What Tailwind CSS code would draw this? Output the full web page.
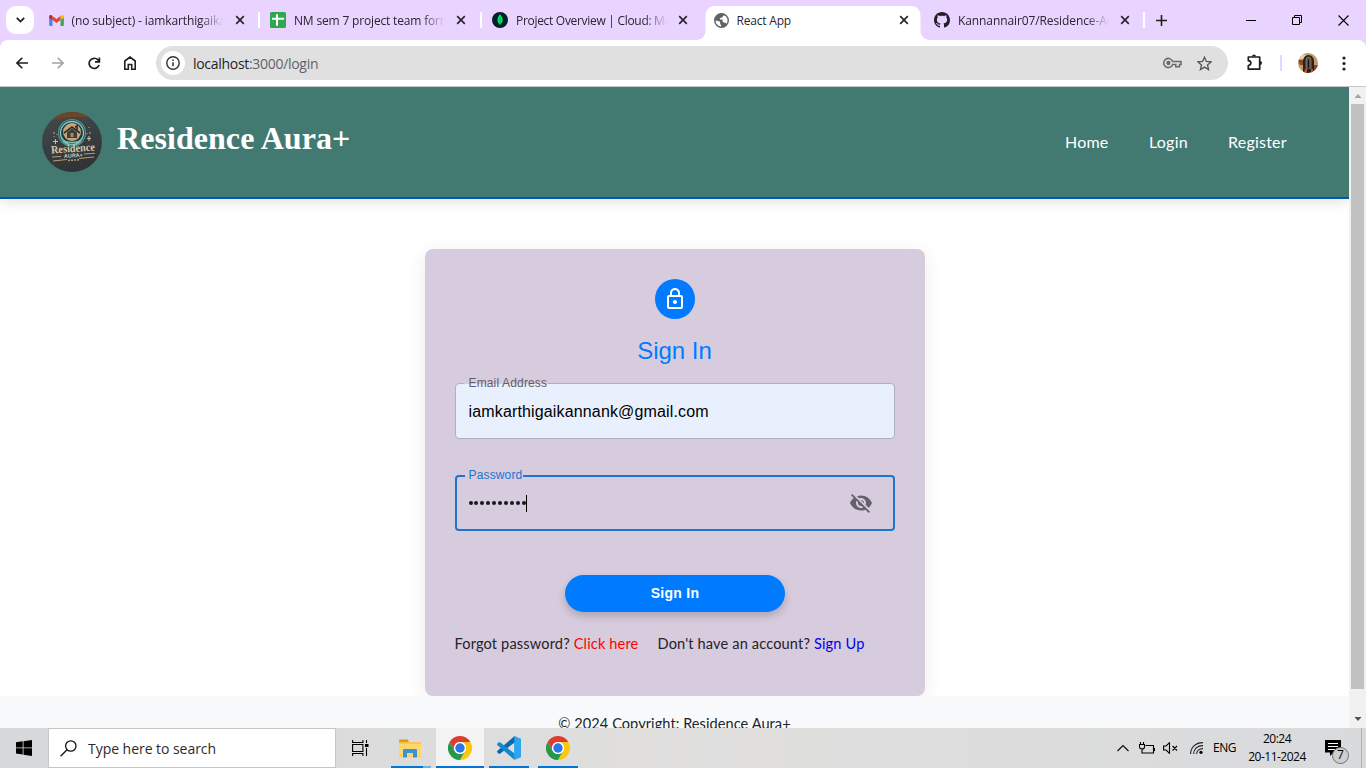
<!DOCTYPE html>
<html lang="en">
<head>
<meta charset="utf-8">
<title>React App</title>
<script src="https://cdn.jsdelivr.net/npm/@tailwindcss/browser@4"></script>
</head>
<body class="w-[1366px] h-[768px] overflow-hidden bg-white flex flex-col font-['Open_Sans',sans-serif]">

<svg class="hidden">
  <defs>
    <symbol id="close" viewBox="0 0 10 10"><path d="M1.2 1.2 8.8 8.8M8.8 1.2 1.2 8.8" stroke="#2a2530" stroke-width="1.7" fill="none"/></symbol>
    <symbol id="chrome" viewBox="0 0 48 48">
      <circle cx="24" cy="24" r="23.5" fill="#fff"/>
      <path d="M24 12h20.8A24 24 0 0 0 3.2 12l10.4 18A12 12 0 0 1 24 12z" fill="#df3b2f"/>
      <path d="M34.4 30 24 48A24 24 0 0 0 44.8 12H24a12 12 0 0 1 10.4 18z" fill="#fdc60f"/>
      <path d="M13.6 30 3.2 12A24 24 0 0 0 24 48l10.4-18a12 12 0 0 1-20.8 0z" fill="#27984a"/>
      <circle cx="24" cy="24" r="12" fill="#fff"/>
      <circle cx="24" cy="24" r="9.4" fill="#2a76e8"/>
    </symbol>
  </defs>
</svg>

<!-- Tab strip -->
<div class="h-10 shrink-0 bg-[#e8d4fe] flex text-[12px] text-[#2b2433]">
  <div class="w-10 pl-1.5 pt-1.5">
    <div class="size-7 rounded-[10px] bg-white grid place-items-center">
      <svg class="w-[9px] h-[6px]" viewBox="0 0 9 6" fill="none" stroke="#1f1f1f" stroke-width="1.8"><path d="M.8.9 4.5 4.6 8.2.9"/></svg>
    </div>
  </div>

  <div class="w-[221.5px] h-10 pl-[8.5px] flex items-center relative">
    <svg class="w-[15px] h-[11px] mr-2" viewBox="0 0 16 12">
      <path d="M0 2v9a1 1 0 0 0 1 1h2.6V5z" fill="#4285f4"/><path d="M16 2v9a1 1 0 0 1-1 1h-2.6V5z" fill="#34a853"/>
      <path d="M12.4 1.2V5.5L16 2.9V1.8C16 .2 14.2-.4 13.2.5z" fill="#fbbc04"/><path d="M3.6 1.2V5.5L8 8.7l4.4-3.2V1.2L8 4.4z" fill="#ea4335"/><path d="M0 1.8v1.1l3.6 2.6V1.2L2.8.5C1.8-.3 0 .2 0 1.8z" fill="#c5221f"/>
    </svg>
    <div class="w-[151px] pt-px overflow-hidden whitespace-nowrap tracking-[-0.12px] mask-r-from-85%">(no subject) - iamkarthigaika</div>
    <svg class="size-[10px] ml-[12px]"><use href="#close"/></svg>
    <div class="absolute left-[218px] top-3 w-0.5 h-4 bg-white"></div>
  </div>

  <div class="w-[221.5px] h-10 pl-[8.5px] flex items-center relative">
    <svg class="size-4 mr-2" viewBox="0 0 16 16"><rect width="16" height="16" rx="1.5" fill="#2fa750"/><path d="M2 6.7h12M7 2.3v11.5" stroke="#fff" stroke-width="2"/></svg>
    <div class="w-[151px] pt-px overflow-hidden whitespace-nowrap tracking-[-0.17px] mask-r-from-85%">NM sem 7 project team form</div>
    <svg class="size-[10px] ml-[11px]"><use href="#close"/></svg>
    <div class="absolute left-[218px] top-3 w-0.5 h-4 bg-white"></div>
  </div>

  <div class="w-[221.5px] h-10 pl-[9px] flex items-center">
    <svg class="size-4 mr-2" viewBox="0 0 16 16"><circle cx="8" cy="8" r="8" fill="#061f2d"/><path d="M8.1 2.3C6.6 4 5.5 5.700 5.500 8c0 2.200 1.200 3.700 2.400 4.300l.2 1.500.3-1.500c1.300-.9 2.300-2.300 2.300-4.300 0-2.300-1.300-4-2.600-5.700z" fill="#00ed64"/><path d="M8.100 5v8" stroke="#07964a" stroke-width=".7"/></svg>
    <div class="w-[151px] pt-px overflow-hidden whitespace-nowrap tracking-[-0.3px] mask-r-from-85%">Project Overview | Cloud: Mo</div>
    <svg class="size-[10px] ml-[11px]"><use href="#close"/></svg>
  </div>

  <div class="w-[221.5px] h-10 relative">
    <svg class="absolute left-[-9px] top-1.5 w-[235px] h-[34px]" viewBox="0 0 235 34"><path d="M0 34c6 0 9.500-4 9.500-9.500V9.500C9.500 4 13.500 0 19 0h196c5.500 0 9.500 4 9.500 9.500v15c0 5.500 4 9.500 10 9.500z" fill="#fff"/></svg>
    <div class="relative h-10 pl-[9px] flex items-center">
      <svg class="size-[15px] mr-2" viewBox="0 0 24 24" fill="#5f6368"><path d="M12 0a12 12 0 1 0 0 24 12 12 0 0 0 0-24zM2.500 11.500C5 13 8 12 9.500 14c1.300 1.700-.5 3 1 4.500 1 1 1.500 2 1 3.200A9.700 9.700 0 0 1 2.500 11.500zM20 17c-1.500-.8-2-2-3.800-2-2 0-3-1.600-2.500-3.200.4-1.300-1.200-1.300-2.700-1.300-1.600 0-2.500-1.700-1-2.700 1.200-.8 3.200.2 3.500-1.500.3-1.500 2-1.200 2.300-2.700C19.500 5 21.700 8.300 21.700 12c0 1.900-.6 3.600-1.700 5z"/></svg>
      <div class="w-[151px] pt-px tracking-[-0.2px]">React App</div>
      <svg class="size-[10px] ml-[11px]"><use href="#close"/></svg>
    </div>
  </div>

  <div class="w-[221.5px] h-10 pl-2 flex items-center relative">
    <svg class="size-4 mr-2" viewBox="0 0 16 16" fill="#24202b"><path d="M8 0C3.580 0 0 3.580 0 8c0 3.540 2.290 6.530 5.470 7.590.4.070.55-.17.55-.38 0-.19-.010-.82-.010-1.490-2.010.37-2.530-.49-2.690-.94-.090-.23-.48-.94-.82-1.130-.28-.15-.68-.52-.010-.53.63-.010 1.080.58 1.230.82.72 1.210 1.870.87 2.330.66.070-.52.28-.87.51-1.070-1.780-.2-3.640-.89-3.640-3.950 0-.87.31-1.590.82-2.150-.080-.2-.36-1.020.080-2.120 0 0 .67-.21 2.200.82.64-.18 1.320-.27 2-.27s1.360.090 2 .27c1.530-1.040 2.200-.82 2.200-.82.44 1.100.16 1.920.080 2.120.51.56.82 1.270.82 2.150 0 3.070-1.870 3.750-3.650 3.950.29.25.54.73.54 1.480 0 1.070-.010 1.930-.010 2.200 0 .21.150.46.55.38A8.010 8.010 0 0 0 16 8c0-4.420-3.580-8-8-8z"/></svg>
    <div class="w-[151px] pt-px overflow-hidden whitespace-nowrap tracking-[-0.1px] mask-r-from-85%">Kannannair07/Residence-Au</div>
    <svg class="size-[10px] ml-[11px]"><use href="#close"/></svg>
    <div class="absolute left-[217px] top-3 w-0.5 h-4 bg-white"></div>
  </div>

  <div class="flex-1 flex items-center">
    <svg class="size-[11px] ml-2" viewBox="0 0 11 11" stroke="#1f1f1f" stroke-width="1.600"><path d="M5.500 0v11M0 5.500h11"/></svg>
    <svg class="w-[10px] h-[11px] ml-[79px]" viewBox="0 0 10 11"><path d="M0 5.500h10" stroke="#000"/></svg>
    <svg class="size-[10px] ml-9" viewBox="0 0 10 10" fill="none" stroke="#000"><path d="M.5 2.500h7v7h-7zM2.500 2.500v-2h7v7h-2"/></svg>
    <svg class="size-[11px] ml-[36px]" viewBox="0 0 11 11" stroke="#000" stroke-width="1.100"><path d="M.5.5l10 10M10.500.5l-10 10"/></svg>
  </div>
</div>

<!-- Toolbar -->
<div class="h-[47px] shrink-0 bg-[#e8d4fe]">
  <div class="h-full bg-white rounded-t-[8px] border-b border-[#c8c8c8] flex items-center">
    <svg class="size-3 ml-4" viewBox="0 0 12 12" fill="none" stroke="#1f1f1f" stroke-width="1.600"><path d="M12 6H1.200M6.300.7 1 6l5.300 5.300"/></svg>
    <svg class="size-3 ml-6" viewBox="0 0 12 12" fill="none" stroke="#a3a3a3" stroke-width="1.600"><path d="M0 6h10.800M5.700.7 11 6l-5.300 5.300"/></svg>
    <svg class="size-[13px] ml-6" viewBox="0 0 13 13" fill="none" stroke="#1f1f1f" stroke-width="1.700"><path d="M11.100 8A5.100 5.100 0 1 1 10 2.900L11.400 4.500M11.400.5v4.300H7"/></svg>
    <svg class="w-3 h-[14px] ml-[23px]" viewBox="0 0 12 14" fill="none" stroke="#1f1f1f" stroke-width="1.600"><path d="M.8 13.200V5L6 1l5.200 4v8.200H7.700V8.500H4.300v4.700z"/></svg>
    <div class="ml-5 w-[1072px] h-[34px] rounded-full bg-[#e0e0e0] flex items-center pl-[5px]">
      <div class="size-6 rounded-full bg-white grid place-items-center">
        <svg class="size-[14px]" viewBox="0 0 14 14"><circle cx="7" cy="7" r="6.200" fill="none" stroke="#333" stroke-width="1.400"/><path d="M7 6.200V10.300M7 3.600v1.500" stroke="#333" stroke-width="1.500"/></svg>
      </div>
      <div class="ml-2 text-[14px] text-[#5f6368] tracking-[-0.3px] flex-1"><span class="text-[#1f1f1f]">localhost</span>:3000/login</div>
      <svg class="w-[19px] h-3" viewBox="0 0 19 12" fill="none" stroke="#6a6a6a" stroke-width="1.500"><path d="M9.600 4.500A4.600 4.600 0 1 0 9.600 7.500h3.200v2.300h3.700V7.500h1.500v-3z"/><circle cx="5.400" cy="6" r="1.400" fill="#6a6a6a"/></svg>
      <svg class="w-[15px] h-[15px] ml-[15px] mr-[16px]" viewBox="0 0 15 15" fill="none" stroke="#555" stroke-width="1.300"><path d="M7.500 1.200l1.900 4.300 4.600.4-3.500 3.100 1.100 4.600-4.100-2.500-4.100 2.500 1.100-4.600L1 5.900l4.600-.4z"/></svg>
    </div>
    <svg class="w-[17px] h-[17px] ml-[18px] -mt-0.5" viewBox="0 0 17 17"><path d="M2.300 3h11.400v12.200H2.300v-3.700c3.400-.3 3.400-4.500 0-4.800z" fill="none" stroke="#1f1f1f" stroke-width="1.700" stroke-linejoin="round"/><path d="M6 2.500a2 2 0 0 1 4 0zM14 7a2 2 0 0 1 0 4z" fill="#1f1f1f"/></svg>
    <div class="w-0.5 h-4 bg-[#e8d4fe] ml-[17px]"></div>
    <svg class="size-5 ml-4" viewBox="0 0 20 20"><defs><clipPath id="av"><circle cx="10" cy="10" r="10"/></clipPath></defs><g clip-path="url(#av)"><path fill="#c49a67" d="M0 0h20v20H0z"/><path fill="#7b4b2c" d="M0 7h6v5H2zM15 12h5v6h-5z"/><path fill="#ead0a1" d="M2 2h6l-2 4H1z"/><path d="M5 20V8a5.500 6 0 0 1 11 0v12z" fill="#29211d"/><path d="M8 16V7a2.500 3 0 0 1 5 0v9" fill="#595049" stroke="#a18b75" stroke-width=".7"/><path d="M10.500 7v8" stroke="#17110e"/><path d="M7 16h2v4H6zM13 16h2v4h-2z" fill="#e24913"/></g></svg>
    <svg class="w-1 h-[15px] ml-6" viewBox="0 0 4 15" fill="#1f1f1f"><circle cx="2" cy="2" r="1.600"/><circle cx="2" cy="7.500" r="1.600"/><circle cx="2" cy="13" r="1.600"/></svg>
  </div>
</div>

<!-- Page -->
<div class="h-[641px] shrink-0 flex overflow-hidden">
  <div class="w-[1349px] h-full overflow-hidden flex flex-col font-['Lato',sans-serif]">
    <header class="relative h-28 shrink-0 bg-[#427a72] border-b-2 border-[#0056b3] shadow-[0_4px_12px_rgba(0,0,0,0.1)] flex pl-[42px] pr-[62px]">
      <svg class="size-[60px] mt-[25px]" viewBox="0 0 60 60">
        <defs><clipPath id="lg"><circle cx="30" cy="30" r="30"/></clipPath><linearGradient id="slate" x2="0.3" y2="1"><stop stop-color="#454b4d"/><stop offset="1" stop-color="#303437"/></linearGradient></defs>
        <g clip-path="url(#lg)">
          <path fill="url(#slate)" d="M0 0h60v60H0z"/><path d="M5 0h50v7Q30 2 5 10z" fill="#6d4527"/>
          <circle cx="30" cy="21" r="13.500" fill="none" stroke="#4d918b" stroke-width="1.200"/><circle cx="30" cy="21" r="11.500" fill="#26383a" stroke="#7fd0c4" stroke-width="1.300"/>
          <circle cx="30" cy="20" r="9" fill="#c9a477"/><path d="M22 21l8-6 8 6M33 15l2-1v4" stroke="#292c2c" stroke-width="1.600" fill="none"/><path d="M25 20.500l5-4 5 4V26H25z" fill="#3d3e3c"/><path d="M28.500 21h3v4h-3z" fill="#a48b69"/>
          <path d="M20 26c2 6 18 6 20 0M21 29c4 5 14 5 18 0" fill="none" stroke="#73bdb4" stroke-width="1.300"/>
          <path d="M11 29.500h5M13.500 27v5M45 26.500h4M47 24v5" stroke="#c9bea5"/><path d="M12 20v2M12 24v1M47 15v1M48 20v2M15 22v1M45 21v1" stroke="#bbae94"/>
          <g transform="rotate(-4 30 38)" fill="#d5c7aa" text-anchor="middle" font-weight="700"><text x="31" y="40" font-size="11" textLength="44" lengthAdjust="spacingAndGlyphs" font-family="Liberation Serif">Residence</text><text x="31" y="45.500" font-size="5.500" textLength="19" lengthAdjust="spacingAndGlyphs" font-family="Liberation Sans">AURA+</text></g>
          <path d="M10 45l9-.5M42 42l11-.7M11 49l14-1.500M37 46.500l15-1.500" stroke="#c9a97e" stroke-width=".9"/><path d="M26 48.500l11-.7" stroke="#b49d79" stroke-width="1.500" stroke-dasharray="2 1"/>
        </g>
      </svg>
      <h1 class="ml-[15px] mt-[33px] h-9 leading-9 text-[32px] tracking-[0.06px] font-bold text-white font-['Liberation_Serif',serif] whitespace-nowrap">Residence Aura+</h1>
      <nav class="ml-auto mt-[45px] flex gap-10 text-[16px] leading-5 tracking-[0.22px] text-white">
        <a class="w-11">Home</a><a class="w-[39px]">Login</a><a class="w-[59px]">Register</a>
      </nav>
    </header>

    <main class="h-[497px] shrink-0 pt-[50px] flex justify-center overflow-hidden">
      <section class="w-[500px] h-[447px] rounded-lg bg-[#d7cbde] shadow-[0_4px_20px_rgba(0,0,0,0.08)] px-[30px] pt-[30px] flex flex-col items-center">
        <div class="size-10 rounded-full bg-[#007bff] grid place-items-center shrink-0">
          <svg class="size-6" viewBox="0 0 24 24" fill="#fff"><path d="M12 17c1.100 0 2-.9 2-2s-.9-2-2-2-2 .9-2 2 .9 2 2 2zm6-9h-1V6c0-2.760-2.240-5-5-5S7 3.240 7 6v2H6c-1.100 0-2 .9-2 2v10c0 1.100.9 2 2 2h12c1.100 0 2-.9 2-2V10c0-1.100-.9-2-2-2zM8.900 6c0-1.710 1.390-3.100 3.100-3.100s3.100 1.390 3.100 3.100v2H8.900V6zM18 20H6V10h12v10z"/></svg>
        </div>
        <h2 class="mt-4 h-8 leading-8 text-[24px] text-[#007bff] font-['Liberation_Sans',sans-serif]">Sign In</h2>

        <div class="relative mt-4 w-[440px] h-14 shrink-0 rounded bg-[#e8f0fe] border border-[#b0b0bd] flex items-center pl-[13px] pt-px text-[16px] tracking-[0.15px] text-black font-['Liberation_Sans',sans-serif]">
          iamkarthigaikannank@gmail.com
          <div class="absolute left-2 -top-px w-[84px] h-px bg-[#d7cbde]"></div>
          <div class="absolute left-[13px] -top-2 text-[12px] leading-[14px] text-[#625d68]">Email Address</div>
        </div>

        <div class="relative mt-9 w-[440px] h-14 shrink-0 rounded border-2 border-[#1976d2] flex items-center pl-3 pr-5 font-['Liberation_Sans',sans-serif]">
          <div class="absolute left-2 -top-0.5 w-[58px] h-0.5 bg-[#d7cbde]"></div>
          <div class="absolute left-3 -top-[9px] text-[12px] leading-[14px] tracking-[0.15px] text-[#1976d2]">Password</div>
          <div class="flex gap-[1.900px] items-center">
            <i class="size-1 rounded-full bg-[#18161a]"></i><i class="size-1 rounded-full bg-[#18161a]"></i><i class="size-1 rounded-full bg-[#18161a]"></i><i class="size-1 rounded-full bg-[#18161a]"></i><i class="size-1 rounded-full bg-[#18161a]"></i><i class="size-1 rounded-full bg-[#18161a]"></i><i class="size-1 rounded-full bg-[#18161a]"></i><i class="size-1 rounded-full bg-[#18161a]"></i><i class="size-1 rounded-full bg-[#18161a]"></i><i class="size-1 rounded-full bg-[#18161a]"></i>
          </div>
          <div class="w-px h-[17px] bg-black"></div>
          <svg class="size-6 ml-auto" viewBox="0 0 24 24" fill="#66606a"><path d="M12 7c2.760 0 5 2.240 5 5 0 .65-.13 1.260-.36 1.830l2.920 2.920c1.510-1.260 2.700-2.890 3.430-4.750-1.730-4.390-6-7.500-11-7.500-1.400 0-2.740.25-3.980.7l2.160 2.160C10.740 7.130 11.350 7 12 7zM2 4.270l2.280 2.280.46.46C3.080 8.300 1.780 10.020 1 12c1.730 4.390 6 7.500 11 7.500 1.550 0 3.030-.3 4.380-.84l.42.42L19.730 22 21 20.730 3.270 3 2 4.270zM7.530 9.800l1.550 1.550c-.05.21-.08.43-.08.65 0 1.660 1.340 3 3 3 .22 0 .44-.03.65-.08l1.550 1.550c-.67.33-1.410.53-2.200.53-2.760 0-5-2.240-5-5 0-.79.2-1.530.53-2.200zm4.310-.78l3.150 3.150.02-.16c0-1.660-1.340-3-3-3l-.17.010z"/></svg>
        </div>

        <div class="mt-11 w-[220px] h-[37px] shrink-0 rounded-full bg-[#007bff] shadow-[0_4px_8px_rgba(0,0,0,0.2)] grid place-items-center pl-px text-[14px] font-bold text-white font-['Liberation_Sans',sans-serif] tracking-[0.25px]">Sign In</div>

        <div class="mt-[22px] w-full flex text-[14.600px] leading-5 tracking-[0.14px] text-[#252228] whitespace-nowrap">
          <div class="w-[203px]">Forgot password? <a class="text-[#ff0000]">Click here</a></div>
          <div>Don't have an account? <a class="text-[#0000ee]">Sign Up</a></div>
        </div>
      </section>
    </main>

    <footer class="flex-1 bg-[#f8f9fb] pt-[18px] text-center text-[14.600px] leading-5 tracking-[0.05px] text-[#212529] overflow-hidden">© 2024 Copyright: Residence Aura+</footer>
  </div>

  <!-- Scrollbar -->
  <div class="w-[17px] h-full bg-[#f1f1f1] flex flex-col items-center">
    <svg class="w-2 h-[17px]" viewBox="0 0 8 17"><path d="M.5 11 4 7l3.500 4z" fill="#a3a3a3"/></svg>
    <div class="w-[13px] h-[585px] bg-[#c1c1c1]"></div>
    <svg class="w-2 h-[17px] mt-auto" viewBox="0 0 8 17"><path d="M.5 6 4 10l3.500-4z" fill="#505050"/></svg>
  </div>
</div>

<!-- Taskbar -->
<div class="h-10 shrink-0 bg-linear-to-r from-[#d6d8da] via-[#e0dfde] to-[#d9dadc] flex text-black">
  <div class="w-12 grid place-items-center">
    <svg class="size-4" viewBox="0 0 16 16"><path d="M0 2.300 6.700 1.300v6.200H0zM7.500 1.200 16 0v7.500H7.500zM0 8.300h6.700v6.300L0 13.600zM7.500 8.300H16V16l-8.500-1.200z"/></svg>
  </div>
  <div class="w-72 bg-white border border-[#c6c6c8] flex items-center pl-[11px] text-[14px] text-[#2b2b2b]">
    <svg class="size-[17px] mr-[11px]" viewBox="0 0 17 17" fill="none" stroke="#111" stroke-width="1.300"><circle cx="10.800" cy="6" r="5.200"/><path d="M7 9.800.6 16.300"/></svg>
    <span class="tracking-[-0.04px]">Type here to search</span>
  </div>
  <div class="w-[55px] flex items-center pl-4">
    <svg class="w-[17px] h-4" viewBox="0 0 17 16" fill="none" stroke="#000" stroke-width="1.100"><path d="M.6 0v2.500h10.300V0M.6 16v-2.500h10.300V16M.6 4.500h10.300v7H.6zM14.500 0v3M14.500 8v8"/><path d="M13 4h3.500v3H13z" fill="#000" stroke="none"/></svg>
  </div>
  <div class="w-10 relative grid place-items-center">
    <svg class="w-[22px] h-[19px] -translate-x-px" viewBox="0 0 22 19"><path d="M0 1h8.500l1.500 2H22v15H0z" fill="#f7c64c"/><path d="M0 1.500A1 1 0 0 1 1 .5h7.500L10 3H0z" fill="#dc9a16"/><path d="M0 5h22v12.500H0z" fill="#fcd66e"/><path d="M4 11a1 1 0 0 1 1-1h12a1 1 0 0 1 1 1v7.500h-4V14H8v4.500H4z" fill="#3a92d6"/></svg>
    <div class="absolute left-0 bottom-0 w-8 h-0.5 bg-[#0076d6]"></div><div class="absolute left-8 bottom-0 w-2 h-0.5 bg-[#73b1e4]"></div>
  </div>
  <div class="w-12 ml-[5px] relative grid place-items-center bg-[#f3f3f3]"><svg class="size-6"><use href="#chrome"/></svg><div class="absolute inset-x-0 bottom-0 h-0.5 bg-[#0076d6]"></div></div>
  <div class="w-10 ml-[5px] relative grid place-items-center">
    <svg class="size-6" viewBox="0 0 24 24"><path d="M17.500 0 24 2.800v18.400L17.500 24l-.4-6.500V6.500z" fill="#2aa7ee"/><path d="M17.500 6.500 3 17.800l-1.200-.1L.2 16.200v-1.100L17.500 0z" fill="#0a68ad"/><path d="M17.500 17.500 3 6.200l-1.200.1L.2 7.800v1.100L17.500 24z" fill="#1388d0"/></svg>
    <div class="absolute inset-x-0 bottom-0 h-0.5 bg-[#0076d6]"></div>
  </div>
  <div class="w-10 ml-[9px] relative grid place-items-center"><svg class="size-6"><use href="#chrome"/></svg><div class="absolute inset-x-0 bottom-0 h-0.5 bg-[#0076d6]"></div></div>

  <div class="ml-auto w-[249px] flex items-center text-[12px]">
    <svg class="w-3 h-2" viewBox="0 0 12 8" fill="none" stroke="#111" stroke-width="1.200"><path d="M.5 7 6 1.500 11.500 7"/></svg>
    <svg class="w-4 h-[13px] ml-[10px]" viewBox="0 0 16 13" fill="none" stroke="#000" stroke-width="1.100"><path d="M6.500 3.500h8v7.500H4.500M15.500 6v3M.5 2.500h5V5c0 1.500-1 2-2.500 2S.5 6.500.5 5zM1.500 0v2.500M4.500 0v2.500M3 7v4h2"/></svg>
    <svg class="w-[15px] h-3 ml-2" viewBox="0 0 15 12" fill="none" stroke="#000" stroke-width="1.100"><path d="M.6 4h2.500L6.500.7v10.600L3.100 8H.6zM9.500 4l4.500 4.500M14 4 9.500 8.500"/></svg>
    <svg class="w-[13px] h-3 ml-3" viewBox="0 0 13 12" fill="none" stroke="#222" stroke-width="1.100"><path d="M.6 12C.6 5.500 5.500.6 13 .6M3.600 12C3.600 7 7.500 3.600 13 3.600M6.600 12c0-3 2.500-5.400 6.400-5.400"/><circle cx="11" cy="10.300" r="1.600" fill="#000" stroke="none"/></svg>
    <div class="ml-[10px] w-[23px] tracking-[-0.5px]">ENG</div>
    <div class="ml-[10px] w-[62px] text-center leading-[18px] text-[12px] tracking-[-0.5px] whitespace-nowrap">20:24<br>20-11-2024</div>
    <div class="relative ml-[17px] mt-1.5 size-6">
      <svg class="size-6 overflow-visible" viewBox="0 0 24 24"><path d="M0 1h16v12.500H8.500L5 17v-3.500H0z"/><path d="M3 4.500h10M3 7.500h10M3 10.500h7" stroke="#fff" stroke-width="1"/><circle cx="15.500" cy="16.500" r="8" fill="#cdcecf" stroke="#666" stroke-width=".9"/></svg>
      <div class="absolute left-[7.500px] top-[8px] w-4 text-center text-[12px] leading-4 font-medium">7</div>
    </div>
    <div class="ml-auto mr-[4px] w-px h-10 bg-[#aeb0b6]"></div>
  </div>
</div>
</body>
</html>
